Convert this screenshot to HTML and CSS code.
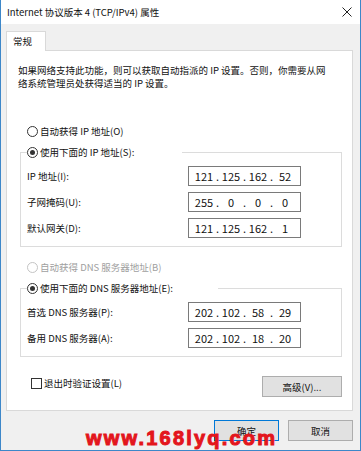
FILE: index.html
```html
<!DOCTYPE html>
<html lang="zh-CN">

<head>
    <meta charset="UTF-8">
    <meta name="viewport" content="width=device-width, initial-scale=1.0">
    <title>Internet 协议版本 4 (TCP/IPv4) 属性</title>
    <link rel="stylesheet" href="styles.css">
</head>

<body>
    <div class="window">
        <div class="titlebar">
            <span class="title">Internet 协议版本 4 (TCP/IPv4) 属性</span>
            <svg class="close" width="10" height="10" viewBox="0 0 10 10">
                <path d="M0.5 0.5L9.5 9.5M9.5 0.5L0.5 9.5" stroke="#222" stroke-width="1" fill="none" />
            </svg>
        </div>

        <div class="body">
            <div class="tabs">
                <span class="tab">常规</span>
            </div>

            <div class="panel">
                <p class="desc">如果网络支持此功能，则可以获取自动指派的 IP 设置。否则，你需要从网<br>络系统管理员处获得适当的 IP 设置。</p>

                <label class="option first">
                    <input type="radio" name="ip">
                    <span>自动获得 IP 地址(O)</span>
                </label>

                <fieldset class="group">
                    <legend class="legend-ip">
                        <label class="option">
                            <input type="radio" name="ip" checked>
                            <span>使用下面的 IP 地址(S):</span>
                        </label>
                    </legend>
                    <div class="rows">
                        <span class="row-label">IP 地址(I):</span>
                        <div class="ip-box">
                            <span class="seg">121</span><span class="dot">.</span><span class="seg">125</span><span class="dot">.</span><span class="seg">162</span><span class="dot">.</span><span class="seg">52</span>
                        </div>
                        <span class="row-label">子网掩码(U):</span>
                        <div class="ip-box">
                            <span class="seg">255</span><span class="dot">.</span><span class="seg">0</span><span class="dot">.</span><span class="seg">0</span><span class="dot">.</span><span class="seg">0</span>
                        </div>
                        <span class="row-label">默认网关(D):</span>
                        <div class="ip-box">
                            <span class="seg">121</span><span class="dot">.</span><span class="seg">125</span><span class="dot">.</span><span class="seg">162</span><span class="dot">.</span><span class="seg">1</span>
                        </div>
                    </div>
                </fieldset>

                <label class="option second disabled">
                    <input type="radio" name="dns" disabled>
                    <span>自动获得 DNS 服务器地址(B)</span>
                </label>

                <fieldset class="group">
                    <legend class="legend-dns">
                        <label class="option">
                            <input type="radio" name="dns" checked>
                            <span>使用下面的 DNS 服务器地址(E):</span>
                        </label>
                    </legend>
                    <div class="rows">
                        <span class="row-label">首选 DNS 服务器(P):</span>
                        <div class="ip-box">
                            <span class="seg">202</span><span class="dot">.</span><span class="seg">102</span><span class="dot">.</span><span class="seg">58</span><span class="dot">.</span><span class="seg">29</span>
                        </div>
                        <span class="row-label">备用 DNS 服务器(A):</span>
                        <div class="ip-box">
                            <span class="seg">202</span><span class="dot">.</span><span class="seg">102</span><span class="dot">.</span><span class="seg">18</span><span class="dot">.</span><span class="seg">20</span>
                        </div>
                    </div>
                </fieldset>

                <div class="panel-footer">
                    <label class="check">
                        <input type="checkbox">
                        <span>退出时验证设置(L)</span>
                    </label>
                    <button class="btn btn-wide">高级(V)...</button>
                </div>
            </div>

            <div class="actions">
                <button class="btn btn-default">确定</button>
                <button class="btn">取消</button>
            </div>
        </div>

        <div class="watermark">www.168lyq.com</div>
    </div>
</body>

</html>
```

FILE: styles.css
```css
* {
    margin: 0;
    padding: 0;
    box-sizing: border-box;
}

body {
    font-family: "Noto Sans CJK SC", "Noto Sans", sans-serif;
    font-size: 9.5px;
    line-height: 16px;
    color: #111;
    background: #fff;
}

.window {
    position: relative;
    width: 361px;
    height: 451px;
    border: 1px solid #3d87c9;
    border-top: none;
    background: #f0f0f0;
    overflow: hidden;
}

.titlebar {
    height: 24px;
    background: #fff;
    display: flex;
    align-items: center;
    justify-content: space-between;
    padding: 0 8px 0 6px;
}

.body {
    padding: 7px 7px 0 5px;
}

.tabs {
    display: flex;
}

.tab {
    position: relative;
    z-index: 1;
    width: 40px;
    height: 20px;
    margin-bottom: -1px;
    padding-left: 6px;
    line-height: 19px;
    background: #fff;
    border: 1px solid #d9d9d9;
    border-bottom: none;
}

.panel {
    background: #fff;
    border: 1px solid #d9d9d9;
    padding: 13px 10px 13px 11px;
}

.desc {
    line-height: 12.5px;
}

.option {
    display: flex;
    align-items: center;
    gap: 2px;
    height: 16px;
}

.option.first {
    margin: 34px 0 0 9px;
}

.option.second {
    margin: 12px 0 0 9px;
}

.option.disabled {
    color: #a0a0a0;
}

input[type="radio"] {
    appearance: none;
    width: 11px;
    height: 11px;
    border: 1px solid #333;
    border-radius: 50%;
    background: #fff;
    display: grid;
    place-items: center;
}

input[type="radio"]:checked::after {
    content: "";
    width: 5px;
    height: 5px;
    border-radius: 50%;
    background: #333;
}

input[type="radio"]:disabled {
    border-color: #c4c4c4;
}

.group {
    margin: 5px 0 0 2px;
    padding: 6px 0 8px 6px;
    border: 1px solid #dcdcdc;
    min-width: 0;
}

.group legend {
    padding: 0;
    height: 16px;
}

.legend-ip {
    width: 155px;
}

.legend-dns {
    width: 191px;
}

.rows {
    display: grid;
    grid-template-columns: 161px 113px;
    grid-auto-rows: 20px;
    row-gap: 6px;
    align-items: center;
}

.ip-box {
    height: 20px;
    border: 1px solid #7a7a7a;
    background: #fff;
    display: flex;
    align-items: center;
    padding-left: 4px;
    font-size: 11px;
}

.seg {
    width: 22px;
    text-align: center;
}

.dot {
    width: 5px;
    text-align: center;
}

.panel-footer {
    margin-top: 19px;
    display: flex;
    justify-content: space-between;
    align-items: flex-start;
}

.check {
    display: flex;
    align-items: center;
    gap: 2px;
    height: 14px;
    margin: 0 0 0 13px;
}

input[type="checkbox"] {
    appearance: none;
    width: 11px;
    height: 11px;
    border: 1px solid #333;
    background: #fff;
}

.btn {
    width: 65px;
    height: 21px;
    font: inherit;
    color: #111;
    background: #e1e1e1;
    border: 1px solid #adadad;
}

.btn-wide {
    width: 80px;
}

.btn-default {
    border-color: #0078d7;
}

.actions {
    margin-top: 9px;
    display: flex;
    justify-content: flex-end;
    gap: 9px;
}

.watermark {
    position: absolute;
    left: 85px;
    top: 428px;
    font-family: "Liberation Sans", Arial, sans-serif;
    font-size: 20px;
    line-height: 20px;
    font-weight: bold;
    letter-spacing: 2.2px;
    color: #e3151c;
    -webkit-text-stroke: 1px #e3151c;
}
```
